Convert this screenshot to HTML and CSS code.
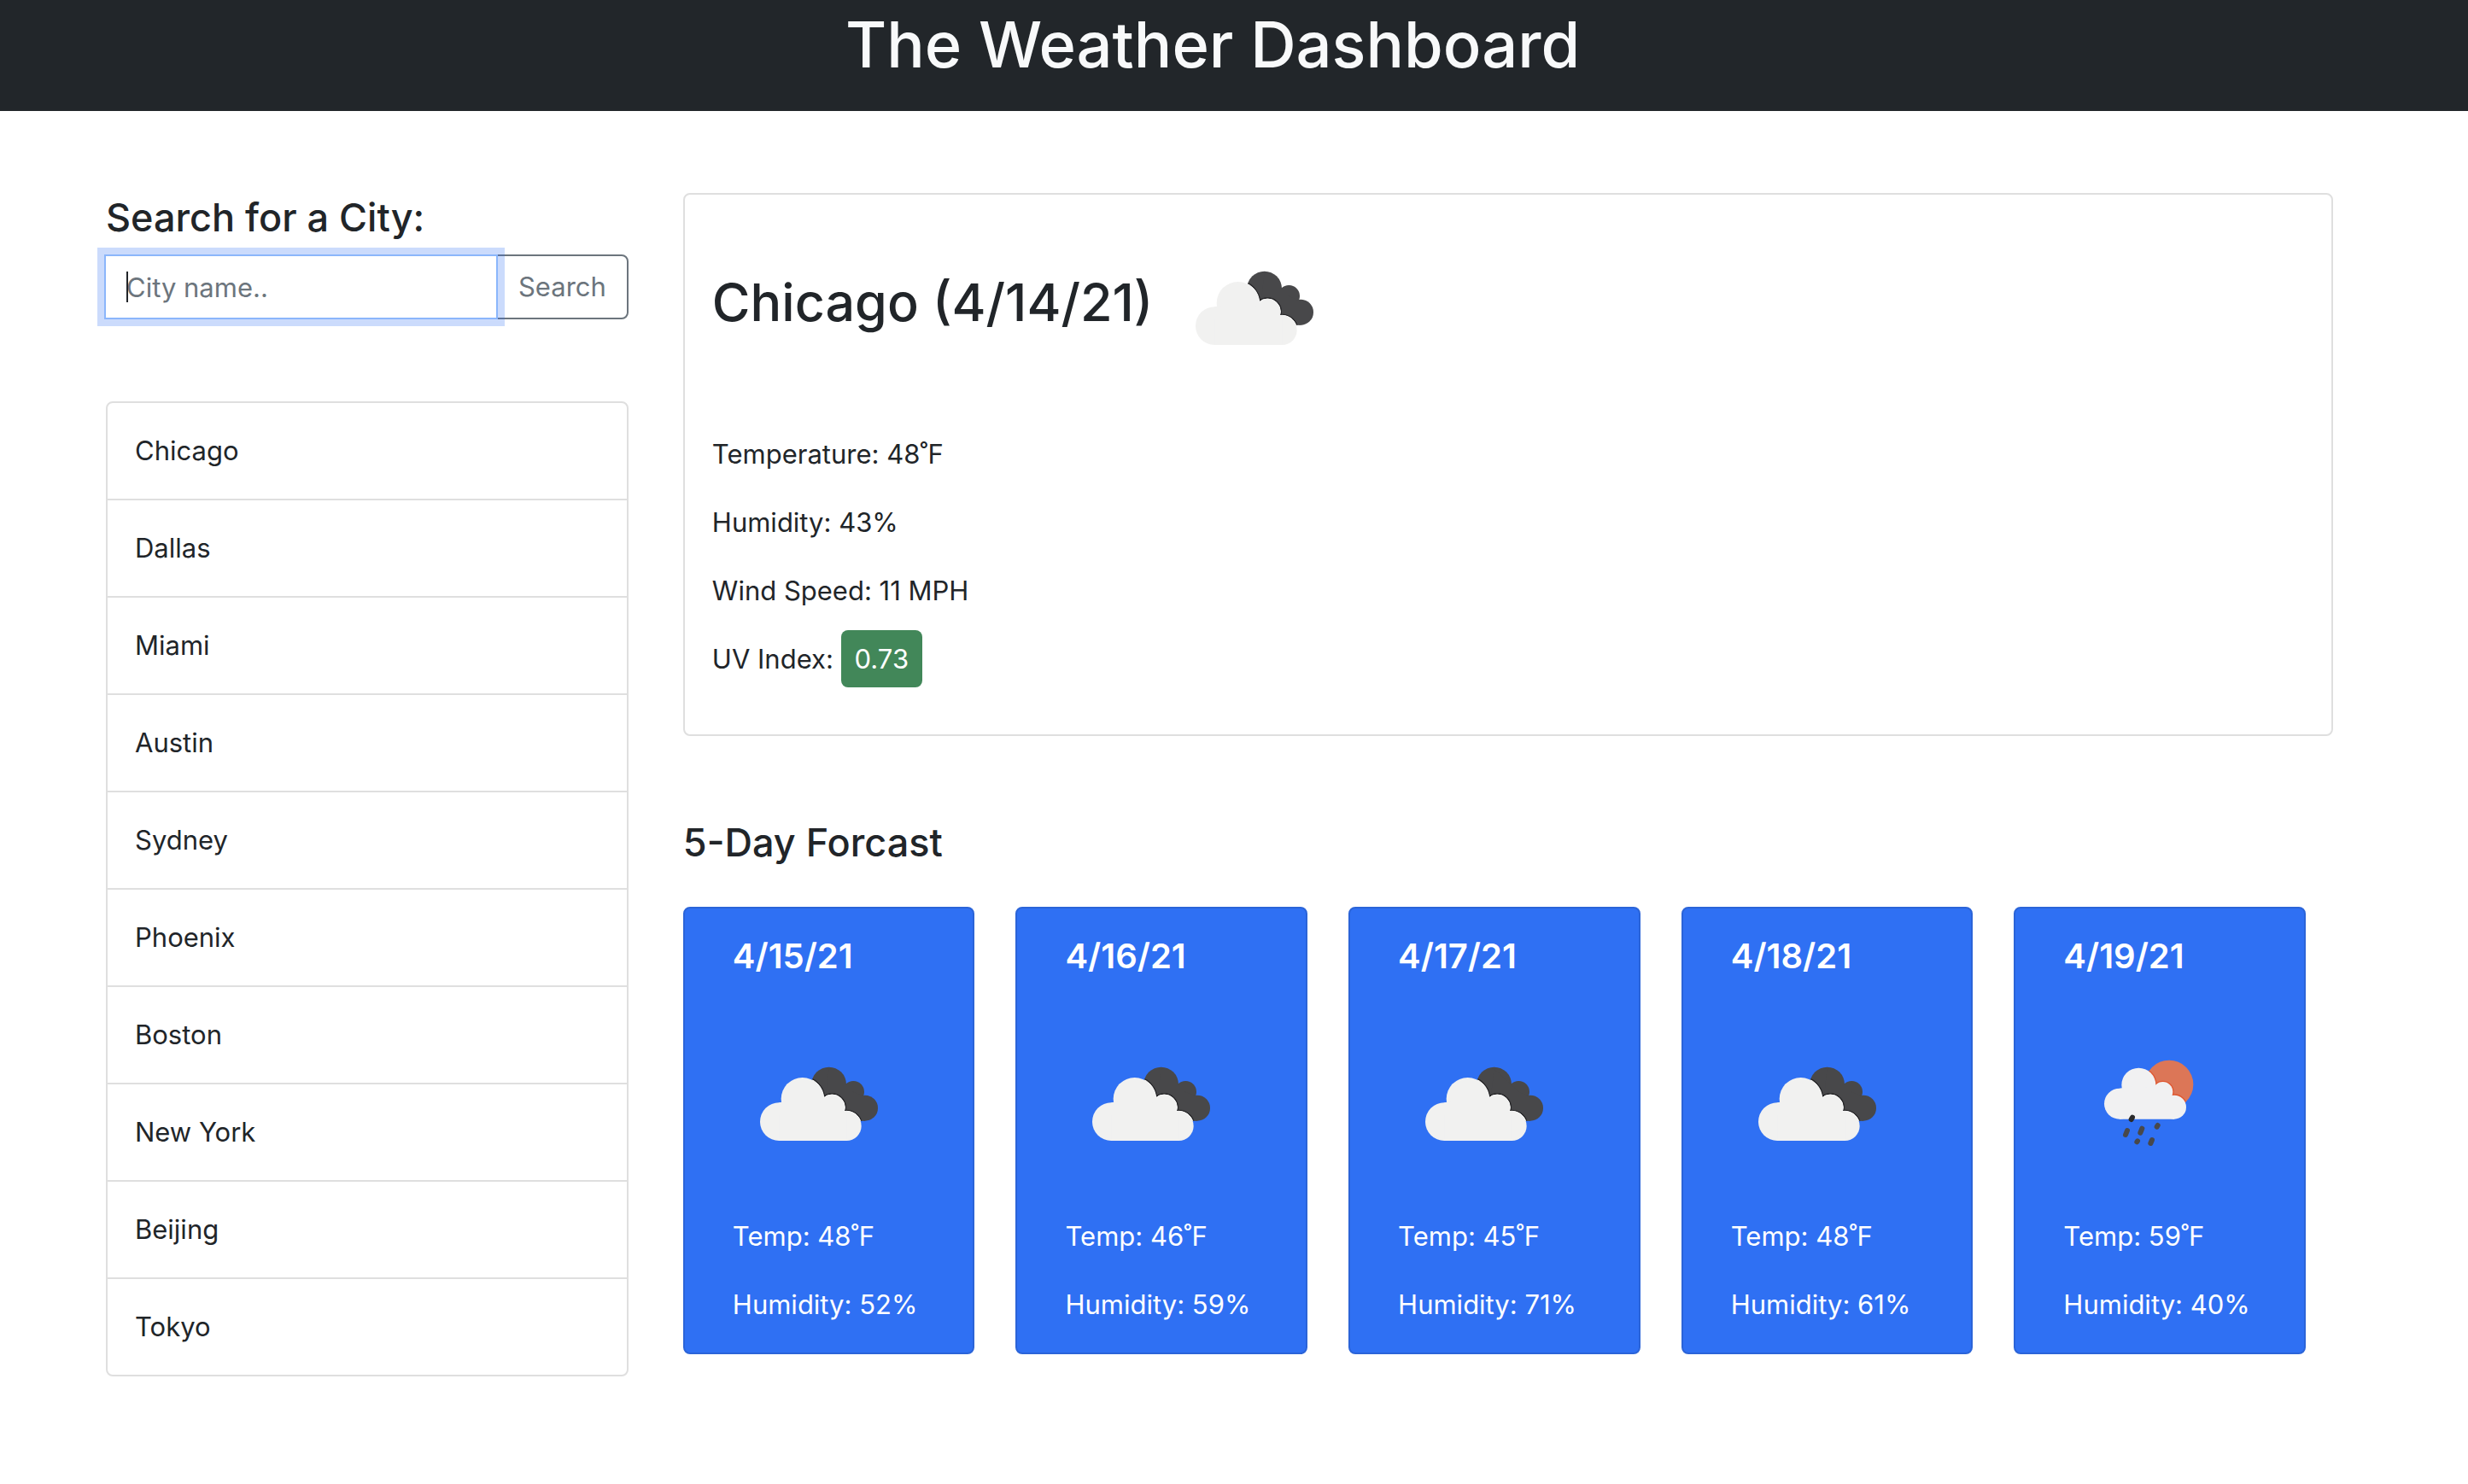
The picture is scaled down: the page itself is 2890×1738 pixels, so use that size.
FILE: index.html
```html
<!DOCTYPE html>
<html lang="en">
<head>
  <meta charset="utf-8">
  <meta name="viewport" content="width=device-width, initial-scale=1">
  <title>The Weather Dashboard</title>
  <link rel="stylesheet" href="styles.css">
</head>
<body>
  <svg class="sprite" aria-hidden="true">
    <defs>
      <g id="dark-cloud">
        <circle cx="302" cy="114" r="61"/>
        <circle cx="388" cy="140" r="38"/>
        <circle cx="429" cy="197" r="45"/>
        <path d="M302 60L361 114L388 140L429 160V242L380 242L290 160Z"/>
      </g>
      <g id="front-cloud">
        <circle cx="127" cy="245" r="67"/>
        <circle cx="209" cy="165" r="75"/>
        <circle cx="313" cy="195" r="45"/>
        <circle cx="364" cy="260" r="52"/>
        <path d="M127 178L209 165L313 195L364 220V312H127Z"/>
      </g>
      <clipPath id="dark-clip">
        <circle cx="302" cy="114" r="61"/>
        <circle cx="388" cy="140" r="38"/>
        <circle cx="429" cy="197" r="45"/>
        <path d="M302 60L361 114L388 140L429 160V242L380 242L290 160Z"/>
      </clipPath>
      <g id="rain-cloud">
        <circle cx="126" cy="218" r="54"/>
        <circle cx="193" cy="152" r="60"/>
        <circle cx="278" cy="176" r="35"/>
        <circle cx="318" cy="230" r="42"/>
        <path d="M126 164L193 152L278 176L318 200V272H126Z"/>
      </g>
      <clipPath id="sun-clip"><circle cx="300" cy="150" r="85"/></clipPath>
      <symbol id="clouds" viewBox="0 0 200 200">
        <g transform="translate(12 40) scale(.33333)">
          <use href="#dark-cloud" fill="#48484a"/>
          <g clip-path="url(#dark-clip)">
            <use href="#front-cloud" fill="#242426" stroke="#242426" stroke-width="10"/>
            <use href="#front-cloud" fill="#fff" stroke="#fff" stroke-width="3"/>
          </g>
          <use href="#front-cloud" fill="#f1f1f0"/>
        </g>
      </symbol>
      <symbol id="sun-rain" viewBox="0 0 200 200">
        <g transform="translate(24 28) scale(.33333)">
          <circle cx="300" cy="150" r="85" fill="#dc7657"/>
          <g clip-path="url(#sun-clip)">
            <use href="#rain-cloud" fill="#df562f" stroke="#df562f" stroke-width="8"/>
          </g>
          <use href="#rain-cloud" fill="#f1f1f2"/>
          <g fill="none" stroke="#48484a" stroke-width="18" stroke-linecap="round">
            <path d="M171 266L167 273" stroke="#2a2a2b"/>
            <path d="M153 312L147 327M205 305L199 320M260 294L257 299M189 349L187 352M240 345L235 357"/>
          </g>
        </g>
      </symbol>
    </defs>
  </svg>

  <header class="site-header">
    <h1>The Weather Dashboard</h1>
  </header>

  <main class="dashboard">
    <aside class="sidebar">
      <form class="search">
        <label class="section-title" for="city">Search for a City:</label>
        <div class="search-group">
          <input class="search-input" id="city" type="text" placeholder="City name.." autocomplete="off" autofocus>
          <button class="search-button" type="button">Search</button>
        </div>
      </form>
      <ul class="city-list">
        <li>Chicago</li>
        <li>Dallas</li>
        <li>Miami</li>
        <li>Austin</li>
        <li>Sydney</li>
        <li>Phoenix</li>
        <li>Boston</li>
        <li>New York</li>
        <li>Beijing</li>
        <li>Tokyo</li>
      </ul>
    </aside>

    <div class="weather">
      <section class="current">
        <div class="current-head">
          <h2>Chicago (4/14/21)</h2>
          <svg class="icon" role="img" aria-label="Broken clouds"><use href="#clouds"/></svg>
        </div>
        <p>Temperature: 48˚F</p>
        <p>Humidity: 43%</p>
        <p>Wind Speed: 11 MPH</p>
        <p>UV Index: <span class="uv">0.73</span></p>
      </section>

      <section class="forecast">
        <h3 class="section-title">5-Day Forcast</h3>
        <div class="days">
          <article class="day">
            <h4>4/15/21</h4>
            <svg class="icon" role="img" aria-label="Broken clouds"><use href="#clouds"/></svg>
            <p>Temp: 48˚F</p>
            <p>Humidity: 52%</p>
          </article>
          <article class="day">
            <h4>4/16/21</h4>
            <svg class="icon" role="img" aria-label="Broken clouds"><use href="#clouds"/></svg>
            <p>Temp: 46˚F</p>
            <p>Humidity: 59%</p>
          </article>
          <article class="day">
            <h4>4/17/21</h4>
            <svg class="icon" role="img" aria-label="Broken clouds"><use href="#clouds"/></svg>
            <p>Temp: 45˚F</p>
            <p>Humidity: 71%</p>
          </article>
          <article class="day">
            <h4>4/18/21</h4>
            <svg class="icon" role="img" aria-label="Broken clouds"><use href="#clouds"/></svg>
            <p>Temp: 48˚F</p>
            <p>Humidity: 61%</p>
          </article>
          <article class="day">
            <h4>4/19/21</h4>
            <svg class="icon" role="img" aria-label="Rain"><use href="#sun-rain"/></svg>
            <p>Temp: 59˚F</p>
            <p>Humidity: 40%</p>
          </article>
        </div>
      </section>
    </div>
  </main>
</body>
</html>
```
FILE: styles.css
```css
*,
*::before,
*::after {
  box-sizing: border-box;
}

body {
  margin: 0;
  background: #fff;
  color: #212529;
  font-family: Inter, "Liberation Sans", sans-serif;
  font-size: 31px;
  line-height: 48px;
}

h1,
h2,
h3,
h4,
p,
ul {
  margin: 0;
  padding: 0;
}

.sprite {
  position: absolute;
  width: 0;
  height: 0;
}

.site-header {
  padding: 4px 50px 30px 0;
  background: #22262a;
  color: #f8f9fa;
  text-align: center;
}

.site-header h1 {
  font-size: 74px;
  font-weight: 500;
  line-height: 96px;
}

.dashboard {
  display: grid;
  grid-template-columns: minmax(0, 19fr) minmax(0, 60fr);
  gap: 64px;
  align-items: start;
  padding: 96px 158px 96px 124px;
}

.section-title {
  display: block;
  font-size: 45px;
  font-weight: 500;
  line-height: 58px;
}

.search-group {
  position: relative;
  display: flex;
  margin: 14px 0 96px -2px;
}

/* Text cursor of the active field */
.search-group::before {
  content: "";
  position: absolute;
  z-index: 2;
  top: 20px;
  left: 26px;
  width: 2px;
  height: 36px;
  background: #212529;
}

.search-input,
.search-button {
  height: 76px;
  padding: 12px 24px;
  border: 2px solid #6c757d;
  background: #fff;
  font: inherit;
}

.search-input {
  position: relative;
  z-index: 1;
  flex: 1;
  min-width: 0;
  border-color: #8bb6fb;
  border-radius: 0;
  outline: none;
  box-shadow: 0 0 0 8px rgba(47, 112, 243, 0.25);
  color: #212529;
  caret-color: transparent;
}

.search-input::placeholder {
  color: #6c757d;
  opacity: 1;
}

.search-button {
  margin-left: -2px;
  border-radius: 0 8px 8px 0;
  color: #6c757d;
}

.city-list {
  border: 2px solid #dfdfdf;
  border-radius: 8px;
  list-style: none;
}

.city-list li {
  padding: 32px;
}

.city-list li + li {
  border-top: 2px solid #dfdfdf;
}

.current {
  padding: 32px;
  border: 2px solid #dfdfdf;
  border-radius: 8px;
}

.current p,
.day p {
  margin-top: 32px;
}

.current-head {
  display: flex;
  align-items: center;
  gap: 18px;
  margin-bottom: 48px;
}

.current-head h2 {
  padding-bottom: 12px;
  font-size: 61px;
  font-weight: 500;
  line-height: 76px;
}

.icon {
  display: block;
  flex: none;
  width: 200px;
  height: 200px;
}

.current p:last-child {
  margin-bottom: 32px;
}

.uv {
  padding: 15px 16px;
  border-radius: 8px;
  background: #428759;
  color: #fff;
}

.forecast {
  padding: 96px 32px 0 0;
}

.days {
  display: grid;
  grid-template-columns: repeat(5, minmax(0, 1fr));
  gap: 48px;
  margin-top: 46px;
}

.day {
  padding: 32px 32px 32px 56px;
  border: 2px solid #2b64d8;
  border-radius: 8px;
  background: #2f70f3;
  color: #fff;
}

.day h4 {
  margin-bottom: 48px;
  font-size: 40px;
  font-weight: 600;
  line-height: 48px;
}
```
